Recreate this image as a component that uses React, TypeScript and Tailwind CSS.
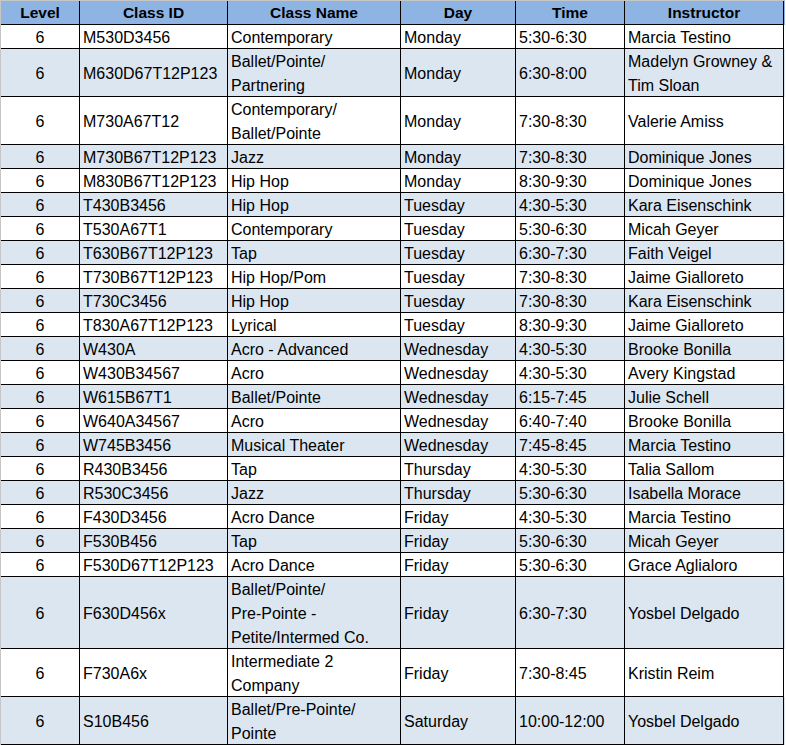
import React from "react";

type Row = {
  id: string;
  name: string[];
  day: string;
  time: string;
  inst: string[];
};

const rows: Row[] = [
  { id: "M530D3456", name: ["Contemporary"], day: "Monday", time: "5:30-6:30", inst: ["Marcia Testino"] },
  { id: "M630D67T12P123", name: ["Ballet/Pointe/", "Partnering"], day: "Monday", time: "6:30-8:00", inst: ["Madelyn Growney &", "Tim Sloan"] },
  { id: "M730A67T12", name: ["Contemporary/", "Ballet/Pointe"], day: "Monday", time: "7:30-8:30", inst: ["Valerie Amiss"] },
  { id: "M730B67T12P123", name: ["Jazz"], day: "Monday", time: "7:30-8:30", inst: ["Dominique Jones"] },
  { id: "M830B67T12P123", name: ["Hip Hop"], day: "Monday", time: "8:30-9:30", inst: ["Dominique Jones"] },
  { id: "T430B3456", name: ["Hip Hop"], day: "Tuesday", time: "4:30-5:30", inst: ["Kara Eisenschink"] },
  { id: "T530A67T1", name: ["Contemporary"], day: "Tuesday", time: "5:30-6:30", inst: ["Micah Geyer"] },
  { id: "T630B67T12P123", name: ["Tap"], day: "Tuesday", time: "6:30-7:30", inst: ["Faith Veigel"] },
  { id: "T730B67T12P123", name: ["Hip Hop/Pom"], day: "Tuesday", time: "7:30-8:30", inst: ["Jaime Gialloreto"] },
  { id: "T730C3456", name: ["Hip Hop"], day: "Tuesday", time: "7:30-8:30", inst: ["Kara Eisenschink"] },
  { id: "T830A67T12P123", name: ["Lyrical"], day: "Tuesday", time: "8:30-9:30", inst: ["Jaime Gialloreto"] },
  { id: "W430A", name: ["Acro - Advanced"], day: "Wednesday", time: "4:30-5:30", inst: ["Brooke Bonilla"] },
  { id: "W430B34567", name: ["Acro"], day: "Wednesday", time: "4:30-5:30", inst: ["Avery Kingstad"] },
  { id: "W615B67T1", name: ["Ballet/Pointe"], day: "Wednesday", time: "6:15-7:45", inst: ["Julie Schell"] },
  { id: "W640A34567", name: ["Acro"], day: "Wednesday", time: "6:40-7:40", inst: ["Brooke Bonilla"] },
  { id: "W745B3456", name: ["Musical Theater"], day: "Wednesday", time: "7:45-8:45", inst: ["Marcia Testino"] },
  { id: "R430B3456", name: ["Tap"], day: "Thursday", time: "4:30-5:30", inst: ["Talia Sallom"] },
  { id: "R530C3456", name: ["Jazz"], day: "Thursday", time: "5:30-6:30", inst: ["Isabella Morace"] },
  { id: "F430D3456", name: ["Acro Dance"], day: "Friday", time: "4:30-5:30", inst: ["Marcia Testino"] },
  { id: "F530B456", name: ["Tap"], day: "Friday", time: "5:30-6:30", inst: ["Micah Geyer"] },
  { id: "F530D67T12P123", name: ["Acro Dance"], day: "Friday", time: "5:30-6:30", inst: ["Grace Aglialoro"] },
  { id: "F630D456x", name: ["Ballet/Pointe/", "Pre-Pointe -", "Petite/Intermed Co."], day: "Friday", time: "6:30-7:30", inst: ["Yosbel Delgado"] },
  { id: "F730A6x", name: ["Intermediate 2", "Company"], day: "Friday", time: "7:30-8:45", inst: ["Kristin Reim"] },
  { id: "S10B456", name: ["Ballet/Pre-Pointe/", "Pointe"], day: "Saturday", time: "10:00-12:00", inst: ["Yosbel Delgado"] },
];

const heightClass: Record<number, string> = {
  1: "h-[24px]",
  2: "h-[48px]",
  3: "h-[72px]",
};

function Cell({
  lines,
  h,
  center,
}: {
  lines: string[];
  h: string;
  center?: boolean;
}) {
  return (
    <div
      className={`${h} flex flex-col justify-center border-r border-b border-black overflow-visible pt-[2px] ${
        center ? "items-center" : "items-start pl-[3px]"
      }`}
    >
      {lines.map((l, i) => (
        <div key={i} className="leading-[24px] h-[24px] shrink-0 whitespace-nowrap">
          {l}
        </div>
      ))}
    </div>
  );
}

export default function App() {
  const headers = ["Level", "Class ID", "Class Name", "Day", "Time", "Instructor"];
  return (
    <div className="bg-white w-[786px] h-[745px]">
      <div
        className="w-[785px] border-t border-l border-[#c6c6c6] text-black text-[16px]"
        style={{ fontFamily: '"Liberation Sans", Arial, sans-serif' }}
      >
        <div className="grid grid-cols-[79px_148px_173px_115px_109px_159px] bg-[#8db4e2] font-bold text-[15.5px]">
          {headers.map((t) => (
            <div
              key={t}
              className="h-[24px] flex items-center justify-center border-r border-b border-black leading-[24px] pt-[1px]"
            >
              {t}
            </div>
          ))}
        </div>
        {rows.map((r, idx) => {
          const n = Math.max(r.name.length, r.inst.length);
          const h = heightClass[n];
          return (
            <div
              key={idx}
              className={`grid grid-cols-[79px_148px_173px_115px_109px_159px] ${
                idx % 2 === 1 ? "bg-[#dce6f1]" : "bg-white"
              }`}
            >
              <Cell lines={["6"]} h={h} center />
              <Cell lines={[r.id]} h={h} />
              <Cell lines={r.name} h={h} />
              <Cell lines={[r.day]} h={h} />
              <Cell lines={[r.time]} h={h} />
              <Cell lines={r.inst} h={h} />
            </div>
          );
        })}
      </div>
    </div>
  );
}
